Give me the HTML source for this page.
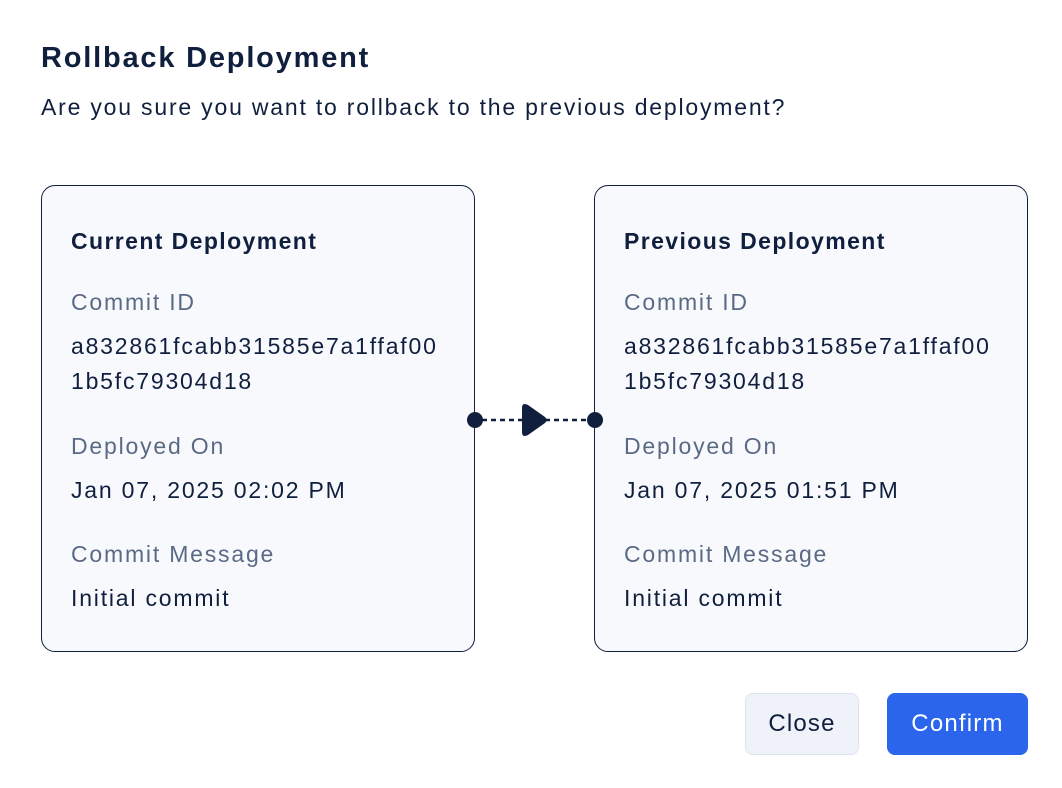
<!DOCTYPE html>
<html><head><style>
body{margin:0;width:1062px;height:788px;background:#fff;font-family:"Liberation Sans",sans-serif;color:#0f1f3d;position:relative;overflow:hidden}
.a{position:absolute;white-space:nowrap}
.card{position:absolute;top:185px;width:434px;height:467px;border:1px solid #0f1f3d;border-radius:14px;background:#f8f9fd;box-sizing:border-box}
.card div{position:absolute;left:29px;font-size:23px;white-space:nowrap;letter-spacing:1.8px}
.card .t{font-weight:bold;top:42px;letter-spacing:1.4px}
.l{color:#5a6a85}
.btn{position:absolute;top:693px;height:62px;border-radius:8px;font-size:24px;display:flex;align-items:center;justify-content:center;box-sizing:border-box;letter-spacing:1.2px}
</style></head><body>
<div class="a" style="left:41px;top:42px;font-size:29px;font-weight:bold;letter-spacing:1.8px">Rollback Deployment</div>
<div class="a" style="left:41px;top:94px;font-size:23px;letter-spacing:1.8px">Are you sure you want to rollback to the previous deployment?</div>
<div class="card" style="left:41px">
<div class="t">Current Deployment</div>
<div class="l" style="top:103px">Commit ID</div>
<div style="top:147px">a832861fcabb31585e7a1ffaf00</div>
<div style="top:182px">1b5fc79304d18</div>
<div class="l" style="top:247px">Deployed On</div>
<div style="top:291px">Jan 07, 2025 02:02 PM</div>
<div class="l" style="top:355px">Commit Message</div>
<div style="top:399px">Initial commit</div>
</div>
<div class="card" style="left:594px">
<div class="t">Previous Deployment</div>
<div class="l" style="top:103px">Commit ID</div>
<div style="top:147px">a832861fcabb31585e7a1ffaf00</div>
<div style="top:182px">1b5fc79304d18</div>
<div class="l" style="top:247px">Deployed On</div>
<div style="top:291px">Jan 07, 2025 01:51 PM</div>
<div class="l" style="top:355px">Commit Message</div>
<div style="top:399px">Initial commit</div>
</div>
<svg class="a" style="left:460px;top:390px" width="150" height="60">
<circle cx="15" cy="30" r="8" fill="#0f1f3d"/>
<circle cx="135" cy="30" r="8" fill="#0f1f3d"/>
<line x1="22" y1="30" x2="128" y2="30" stroke="#0f1f3d" stroke-width="2.5" stroke-dasharray="5,4"/>
<path d="M62 18 Q62 12 68 15 L85 27 Q88 30 85 33 L68 45 Q62 48 62 42 Z" fill="#0f1f3d"/>
</svg>
<div class="btn" style="left:745px;width:114px;background:#eff2f9;border:1px solid #dde2ee">Close</div>
<div class="btn" style="left:887px;width:141px;background:#2b65ec;color:#fff">Confirm</div>
</body></html>
